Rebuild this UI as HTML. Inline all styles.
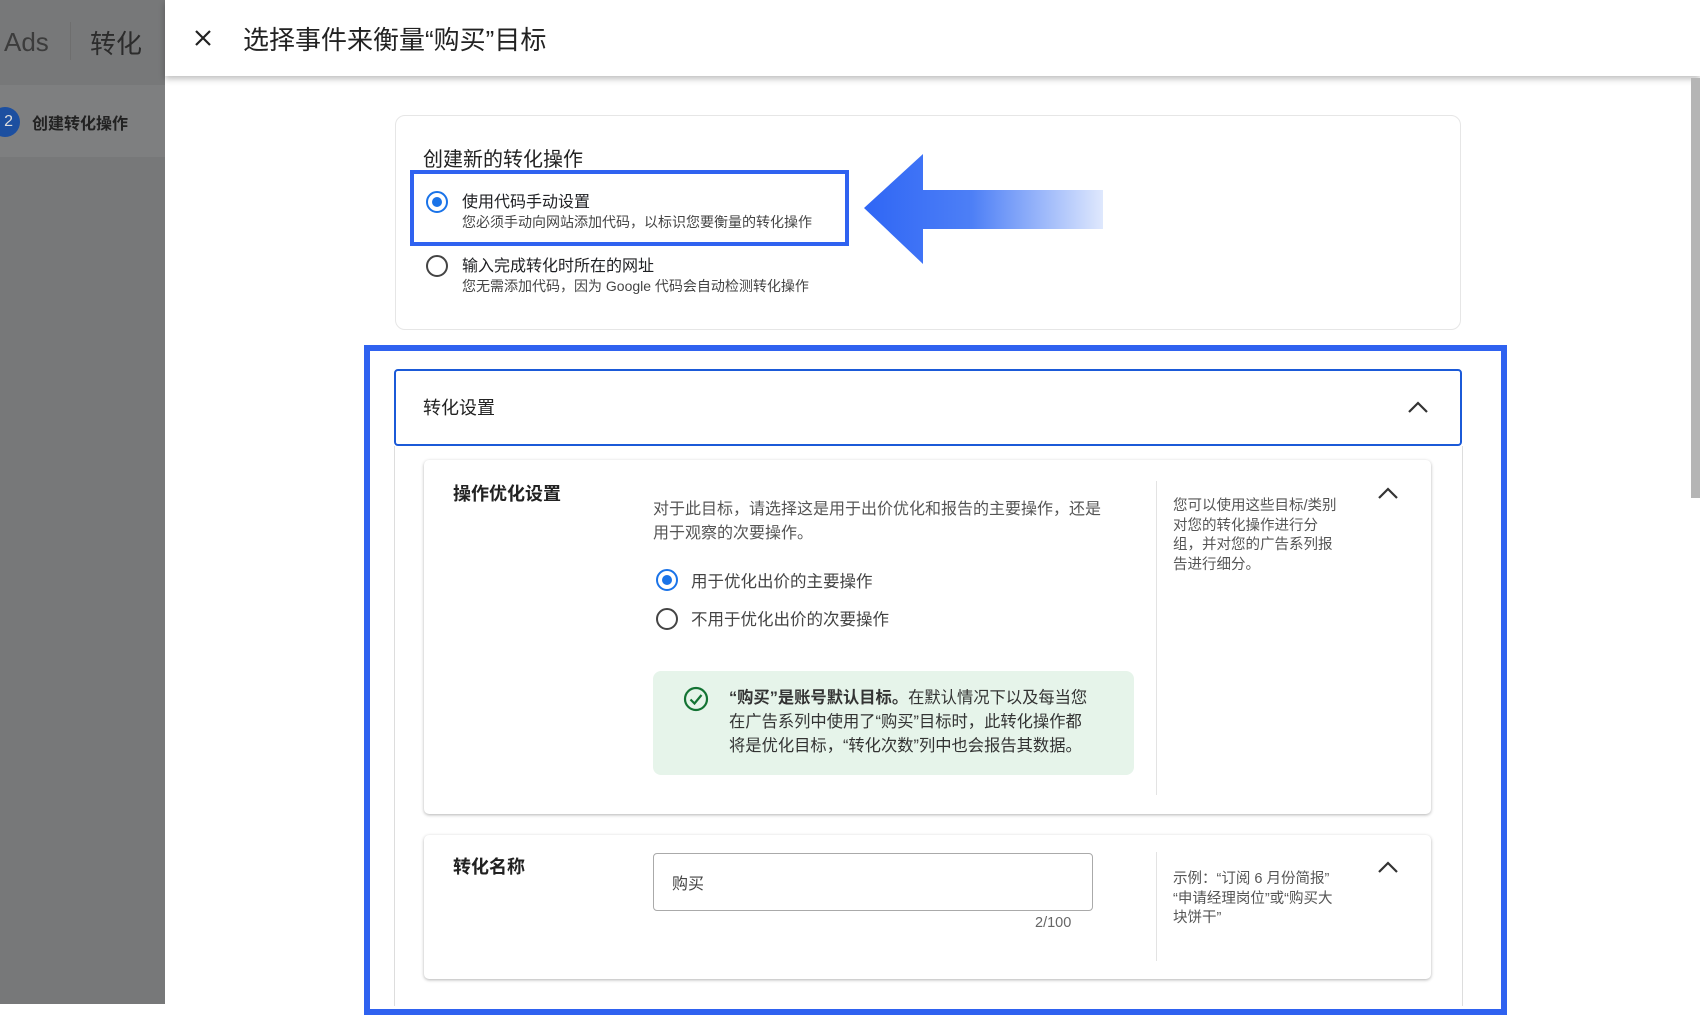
<!DOCTYPE html>
<html><head><meta charset="utf-8"><style>
*{margin:0;padding:0;box-sizing:border-box}
body{width:1700px;height:1004px;overflow:hidden;background:#fff;position:relative;font-family:"Liberation Sans","Noto Sans CJK SC",sans-serif;color:#202124}
.a{position:absolute;white-space:nowrap}
.side{left:0;top:0;width:165px;height:1004px;background:#777879}
.radio{position:absolute;border-radius:50%;border:2px solid #444;width:22px;height:22px;background:#fff}
.radio.on{border-color:#1a73e8}
.radio.on::after{content:"";position:absolute;left:4px;top:4px;width:10px;height:10px;border-radius:50%;background:#1a73e8}
.chev{position:absolute;width:22px;height:14px}
</style></head><body>
<div class="a side"></div>
<div class="a" style="left:0;top:85px;width:165px;height:72px;background:#7e7f80"></div>
<div class="a" style="left:4px;top:27px;font-size:26px;color:#3c3c3c">Ads</div>
<div class="a" style="left:70px;top:22px;width:1px;height:38px;background:#6e6e6e"></div>
<div class="a" style="left:90px;top:24px;font-size:26px;color:#2c2c2c">转化</div>
<div class="a" style="left:-10px;top:107px;width:30px;height:30px;border-radius:50%;background:#1c4fa0;color:#ddd;font-size:16px;line-height:30px;text-align:right;padding-right:7px">2</div>
<div class="a" style="left:32px;top:110px;font-size:16px;color:#222;font-weight:bold">创建转化操作</div>

<div class="a" style="left:165px;top:0;width:1535px;height:76px;background:#fff;box-shadow:0 3px 6px rgba(0,0,0,.25)"></div>
<svg class="a" style="left:194px;top:29px" width="18" height="18" viewBox="0 0 18 18"><path d="M2 2L16 16M16 2L2 16" stroke="#222" stroke-width="2.2"/></svg>
<div class="a" style="left:243px;top:20px;font-size:26px;color:#222">选择事件来衡量“购买”目标</div>
<div class="a" style="left:1691px;top:78px;width:9px;height:420px;background:#b5b5b5"></div>

<div class="a" style="left:395px;top:115px;width:1066px;height:215px;border:1px solid #e6e6e6;border-radius:10px"></div>
<div class="a" style="left:423px;top:143px;font-size:20px;color:#222">创建新的转化操作</div>
<div class="a" style="left:410px;top:170px;width:439px;height:76px;border:4px solid #2f62f0"></div>
<div class="radio on" style="left:426px;top:191px"></div>
<div class="a" style="left:462px;top:188px;font-size:16px">使用代码手动设置</div>
<div class="a" style="left:462px;top:212px;font-size:14px;color:#444">您必须手动向网站添加代码，以标识您要衡量的转化操作</div>
<div class="radio" style="left:426px;top:255px"></div>
<div class="a" style="left:462px;top:252px;font-size:16px">输入完成转化时所在的网址</div>
<div class="a" style="left:462px;top:276px;font-size:14px;color:#444">您无需添加代码，因为 Google 代码会自动检测转化操作</div>

<svg class="a" style="left:862px;top:152px" width="245" height="114" viewBox="0 0 245 114">
<defs><linearGradient id="g" x1="0" x2="1"><stop offset="0" stop-color="#2f66f5"/><stop offset="0.45" stop-color="#4d7ff6"/><stop offset="1" stop-color="#dfe8fd"/></linearGradient></defs>
<path d="M2 56L61 2L61 38L241 38L241 77L61 77L61 112Z" fill="url(#g)"/>
</svg>

<div class="a" style="left:364px;top:345px;width:1143px;height:670px;border:6px solid #2f62f0"></div>
<div class="a" style="left:394px;top:446px;width:1069px;height:560px;border-left:1px solid #ddd;border-right:1px solid #ddd"></div>
<div class="a" style="left:394px;top:369px;width:1068px;height:77px;border:2px solid #1b5ad8;border-radius:4px;background:#fff"></div>
<div class="a" style="left:423px;top:394px;font-size:18px;color:#222">转化设置</div>
<svg class="chev" style="left:1407px;top:400px" viewBox="0 0 22 14"><path d="M2 12L11 3L20 12" fill="none" stroke="#333" stroke-width="2.2"/></svg>

<div class="a" style="left:424px;top:460px;width:1007px;height:354px;background:#fff;border-radius:5px;box-shadow:0 1px 3px rgba(0,0,0,.3)"></div>
<div class="a" style="left:453px;top:480px;font-size:18px;font-weight:bold;color:#222">操作优化设置</div>
<div class="a" style="left:653px;top:498px;font-size:16px;color:#555;line-height:24px">对于此目标，请选择这是用于出价优化和报告的主要操作，还是<br>用于观察的次要操作。</div>
<div class="radio on" style="left:656px;top:569px"></div>
<div class="a" style="left:691px;top:568px;font-size:16.5px;color:#444">用于优化出价的主要操作</div>
<div class="radio" style="left:656px;top:608px"></div>
<div class="a" style="left:691px;top:606px;font-size:16.5px;color:#444">不用于优化出价的次要操作</div>
<div class="a" style="left:653px;top:671px;width:481px;height:104px;background:#e6f4ea;border-radius:8px"></div>
<svg class="a" style="left:683px;top:686px" width="26" height="26" viewBox="0 0 26 26"><circle cx="13" cy="13" r="11" fill="none" stroke="#137333" stroke-width="2.2"/><path d="M7.5 13.5L11.5 17.5L18.5 9" fill="none" stroke="#137333" stroke-width="2.2"/></svg>
<div class="a" style="left:729px;top:686px;font-size:16.3px;color:#333;line-height:24px"><b>“购买”是账号默认目标。</b>在默认情况下以及每当您<br>在广告系列中使用了“购买”目标时，此转化操作都<br>将是优化目标，“转化次数”列中也会报告其数据。</div>
<div class="a" style="left:1156px;top:481px;width:1px;height:314px;background:#e3e3e3"></div>
<div class="a" style="left:1173px;top:497px;font-size:14.5px;color:#555;line-height:19.5px">您可以使用这些目标/类别<br>对您的转化操作进行分<br>组，并对您的广告系列报<br>告进行细分。</div>
<svg class="chev" style="left:1377px;top:486px" viewBox="0 0 22 14"><path d="M2 12L11 3L20 12" fill="none" stroke="#333" stroke-width="2.2"/></svg>

<div class="a" style="left:424px;top:835px;width:1007px;height:144px;background:#fff;border-radius:5px;box-shadow:0 1px 3px rgba(0,0,0,.3)"></div>
<div class="a" style="left:453px;top:853px;font-size:18px;font-weight:bold;color:#222">转化名称</div>
<div class="a" style="left:653px;top:853px;width:440px;height:58px;border:1.5px solid #aaa;border-radius:4px"></div>
<div class="a" style="left:672px;top:870px;font-size:16px;color:#444">购买</div>
<div class="a" style="left:1035px;top:915px;font-size:14.5px;color:#666">2/100</div>
<div class="a" style="left:1156px;top:852px;width:1px;height:109px;background:#e3e3e3"></div>
<div class="a" style="left:1173px;top:870px;font-size:14.5px;color:#555;line-height:19.5px">示例：“订阅 6 月份简报”<br>“申请经理岗位”或“购买大<br>块饼干”</div>
<svg class="chev" style="left:1377px;top:860px" viewBox="0 0 22 14"><path d="M2 12L11 3L20 12" fill="none" stroke="#333" stroke-width="2.2"/></svg>
</body></html>
